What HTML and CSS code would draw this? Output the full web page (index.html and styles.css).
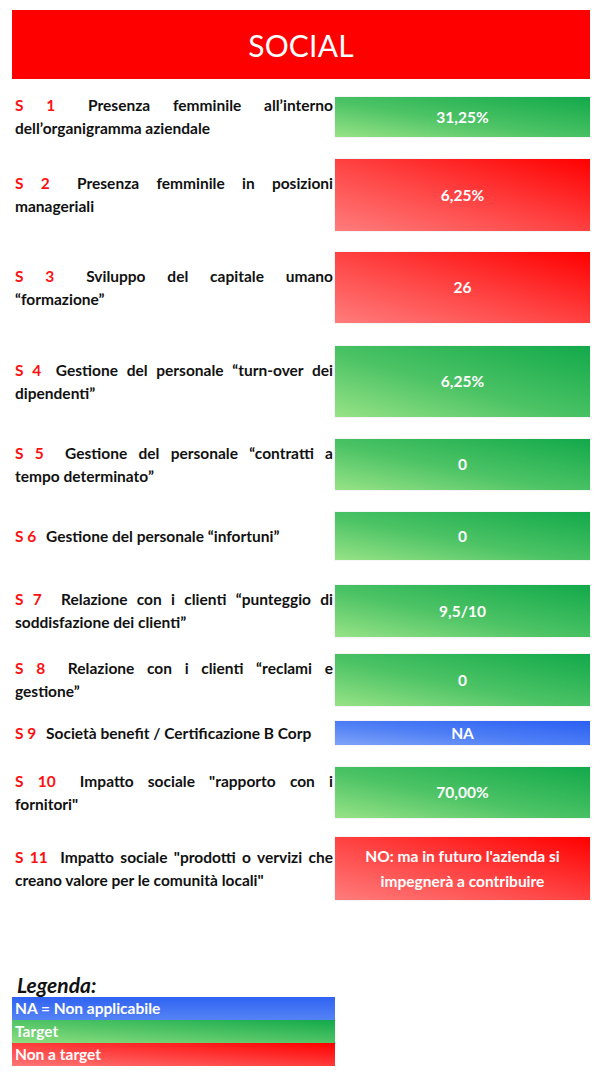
FILE: index.html
```html
<!DOCTYPE html>
<html lang="it">
<head>
<meta charset="utf-8">
<title>Social</title>
<link rel="stylesheet" href="styles.css">
</head>
<body>
<div class="page">
  <header class="banner">SOCIAL</header>

  <section class="rows">
    <div class="row r1">
      <p class="label"><span class="code">S 1</span> Presenza femminile all’interno dell’organigramma aziendale</p>
      <div class="box green">31,25%</div>
    </div>
    <div class="row r2">
      <p class="label"><span class="code">S 2</span> Presenza femminile in posizioni manageriali</p>
      <div class="box red">6,25%</div>
    </div>
    <div class="row r3">
      <p class="label"><span class="code">S 3</span> Sviluppo del capitale umano “formazione”</p>
      <div class="box red">26</div>
    </div>
    <div class="row r4">
      <p class="label"><span class="code tight">S 4</span> Gestione del personale “turn-over dei dipendenti”</p>
      <div class="box green">6,25%</div>
    </div>
    <div class="row r5">
      <p class="label"><span class="code">S 5</span> Gestione del personale “contratti a tempo determinato”</p>
      <div class="box green">0</div>
    </div>
    <div class="row r6">
      <p class="label"><span class="code tight">S 6</span> Gestione del personale “infortuni”</p>
      <div class="box green">0</div>
    </div>
    <div class="row r7">
      <p class="label"><span class="code">S 7</span> Relazione con i clienti “punteggio di soddisfazione dei clienti”</p>
      <div class="box green">9,5/10</div>
    </div>
    <div class="row r8">
      <p class="label"><span class="code">S 8</span> Relazione con i clienti “reclami e gestione”</p>
      <div class="box green">0</div>
    </div>
    <div class="row r9">
      <p class="label"><span class="code tight">S 9</span> Società benefit / Certificazione B Corp</p>
      <div class="box blue">NA</div>
    </div>
    <div class="row r10">
      <p class="label"><span class="code">S 10</span> Impatto sociale "rapporto con i fornitori"</p>
      <div class="box green">70,00%</div>
    </div>
    <div class="row r11">
      <p class="label"><span class="code tight">S 11</span> Impatto sociale "prodotti o vervizi che creano valore per le comunità locali"</p>
      <div class="box red">NO: ma in futuro l'azienda si<br>impegnerà a contribuire</div>
    </div>
  </section>

  <section class="legend">
    <h2 class="legend-title">Legenda:</h2>
    <div class="legend-item blue">NA = Non applicabile</div>
    <div class="legend-item green">Target</div>
    <div class="legend-item red">Non a target</div>
  </section>
</div>
</body>
</html>
```

FILE: styles.css
```css
* { box-sizing: border-box; }

html, body {
  margin: 0;
  padding: 0;
  background: #ffffff;
}

body {
  font-family: Lato, "Open Sans", "DejaVu Sans", sans-serif;
  color: #111111;
}

.page {
  width: 605px;
  padding: 10px 15px 0 12px;
}

.banner {
  height: 69px;
  background: #ff0000;
  color: #ffffff;
  font-size: 30px;
  font-weight: 400;
  display: flex;
  align-items: center;
  justify-content: center;
  letter-spacing: 0.2px;
}

.rows {
  display: flex;
  flex-direction: column;
}

.row {
  display: flex;
  align-items: center;
  gap: 2px;
}

.label {
  margin: 0;
  width: 321px;
  padding-left: 3px;
  font-size: 15.5px;
  font-weight: 700;
  line-height: 23px;
  text-align: justify;
}

.code {
  color: #ff1010;
  margin-right: 10px;
}

.code.tight {
  margin-right: 6px;
}

.box {
  width: 255px;
  flex: none;
  display: flex;
  align-items: center;
  justify-content: center;
  text-align: center;
  color: #ffffff;
  font-size: 15.5px;
  font-weight: 700;
  line-height: 25px;
  box-shadow: 0 0 0 0.5px rgba(0, 0, 0, 0.08);
}

.green { background: linear-gradient(to top right, #97e386 0%, #4cc365 45%, #12a94b 100%); }
.red   { background: linear-gradient(to top right, #ff7c7c 0%, #ff4747 45%, #ff0000 100%); }
.blue  { background: linear-gradient(to top right, #7fa3f9 0%, #4f7ff5 45%, #2a5ff3 100%); }

/* row 1: label (46px) is taller than its box (40px), so offsets account for it */
.r1  { margin-top: 15px; } .r1 .box  { height: 40px; }
.r2  { margin-top: 19px; } .r2 .box  { height: 72px; }
.r3  { margin-top: 21px; } .r3 .box  { height: 71px; }
.r4  { margin-top: 23px; } .r4 .box  { height: 71px; }
.r5  { margin-top: 22px; } .r5 .box  { height: 51px; }
.r6  { margin-top: 22px; } .r6 .box  { height: 48px; }
.r7  { margin-top: 25px; } .r7 .box  { height: 52px; }
.r8  { margin-top: 17px; } .r8 .box  { height: 52px; }
.r9  { margin-top: 15px; } .r9 .box  { height: 24px; }
.r10 { margin-top: 22px; } .r10 .box { height: 51px; }
.r11 { margin-top: 19px; } .r11 .box { height: 63px; }

.legend {
  margin-top: 72px;
  width: 323px;
}

.legend-title {
  margin: 0 0 0 5px;
  font-size: 21px;
  font-weight: 700;
  font-style: italic;
  line-height: 25px;
  color: #111111;
}

.legend-item {
  height: 23px;
  padding-left: 3px;
  color: #ffffff;
  font-size: 15.5px;
  font-weight: 700;
  line-height: 23px;
}

.legend-item.blue  { background: linear-gradient(to bottom, #2f63f2, #5583f5); }
.legend-item.green { background: linear-gradient(to top right, #8edf80, #12a94b); }
.legend-item.red   { background: linear-gradient(to top right, #ff7676, #ff0000); }
```
